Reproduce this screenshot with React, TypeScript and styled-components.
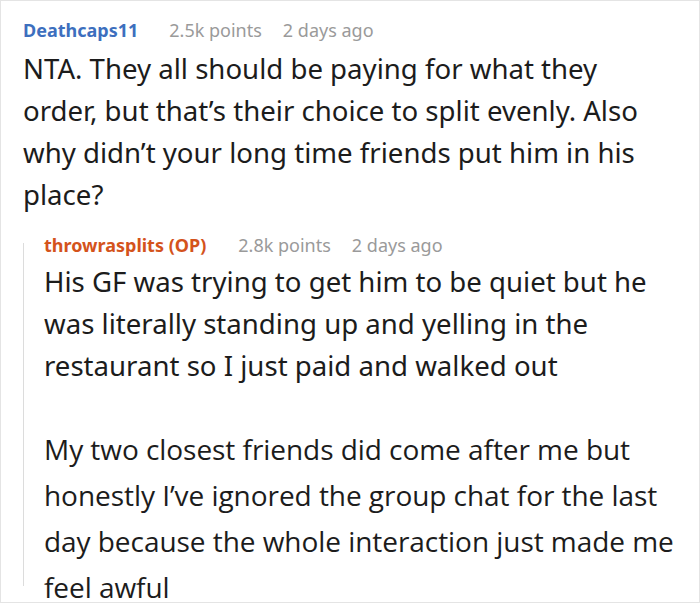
import React from 'react';
import styled, { createGlobalStyle } from 'styled-components';

const GlobalStyle = createGlobalStyle`
  html, body {
    margin: 0;
    padding: 0;
    background: #ffffff;
  }
  body {
    font-family: 'Noto Sans', 'Open Sans', sans-serif;
  }
`;

const Card = styled.div`
  box-sizing: border-box;
  width: 700px;
  height: 603px;
  border: 1px solid #e4e4e4;
  padding: 17px 19px 0 22px;
  overflow: hidden;
`;

const Header = styled.div`
  display: flex;
  align-items: baseline;
  font-size: 18px;
  line-height: 24px;
  white-space: nowrap;
`;

const Author = styled.span<{ $op?: boolean }>`
  font-weight: 700;
  color: ${p => (p.$op ? '#d4531c' : '#3d6fbe')};
  margin-right: ${p => (p.$op ? '32px' : '31px')};
`;

const Meta = styled.span`
  color: #9a9a9a;
  margin-right: 21px;
`;

const Body = styled.div<{ $gap: number; $inset?: number }>`
  margin-top: ${p => p.$gap}px;
  padding-right: ${p => p.$inset ?? 0}px;
  font-size: 27.6px;
  line-height: 42px;
  color: #1c1c1c;
`;

const Paragraph = styled.p`
  margin: 0;
`;

const LaterParagraph = styled.p`
  margin: 40px 0 0;
  font-family: 'Open Sans', 'Noto Sans', sans-serif;
  font-size: 28px;
  line-height: 46px;
  letter-spacing: -0.05px;
`;

const Reply = styled.div`
  position: relative;
  margin-top: 18px;
  padding-left: 21px;

  &::before {
    content: '';
    position: absolute;
    left: 0;
    top: 10px;
    height: 343px;
    width: 1px;
    background: #dcdcdc;
  }
`;

interface CommentHeaderProps {
  author: string;
  points: string;
  age: string;
  op?: boolean;
}

const CommentHeader: React.FC<CommentHeaderProps> = ({ author, points, age, op }) => (
  <Header>
    <Author $op={op}>{author}</Author>
    <Meta>{points}</Meta>
    <Meta>{age}</Meta>
  </Header>
);

export default function App() {
  return (
    <>
      <GlobalStyle />
      <Card>
        <CommentHeader author="Deathcaps11" points="2.5k points" age="2 days ago" />
        <Body $gap={5} $inset={6}>
          <Paragraph>
            NTA. They all should be paying for what they order, but that’s their choice to split
            evenly. Also why didn’t your long time friends put him in his place?
          </Paragraph>
        </Body>
        <Reply>
          <CommentHeader author="throwrasplits (OP)" points="2.8k points" age="2 days ago" op />
          <Body $gap={3}>
            <Paragraph>
              His GF was trying to get him to be quiet but he was literally standing up and yelling
              in the restaurant so I just paid and walked out
            </Paragraph>
            <LaterParagraph>
              My two closest friends did come after me but honestly I’ve ignored the group chat for
              the last day because the whole interaction just made me feel awful
            </LaterParagraph>
          </Body>
        </Reply>
      </Card>
    </>
  );
}
